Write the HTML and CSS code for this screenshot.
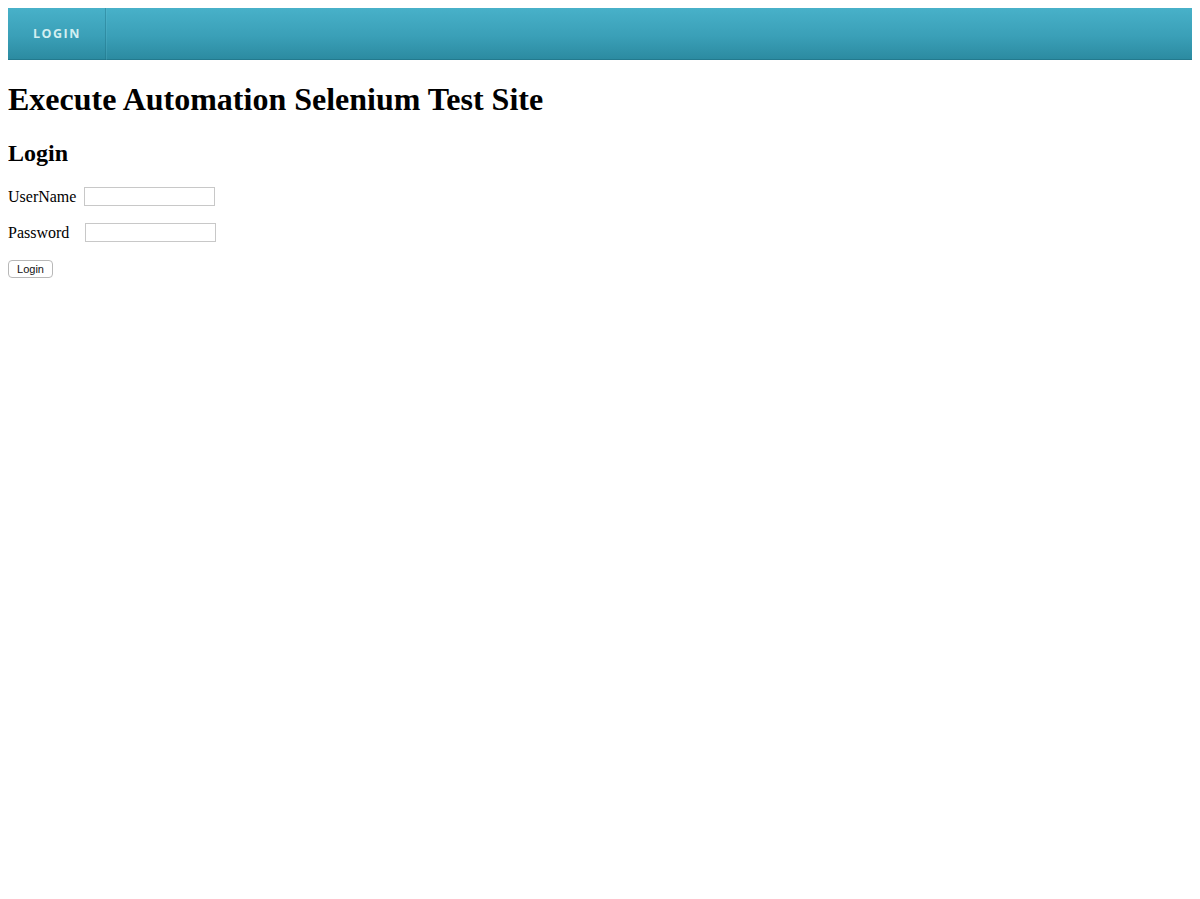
FILE: index.html
```html
<!DOCTYPE html>
<html>
<head>
<meta charset="utf-8">
<title>Execute Automation</title>
<link rel="stylesheet" href="styles.css">
</head>
<body>
<nav class="navbar">
  <ul class="menu">
    <li class="menu-item"><a href="#" class="menu-link">LOGIN</a></li>
  </ul>
</nav>
<h1 class="title">Execute Automation Selenium Test Site</h1>
<h2 class="subtitle">Login</h2>
<form class="login-form">
  <p class="row"><label class="lbl lbl-user">UserName</label><input class="field" type="text" name="UserName"></p>
  <p class="row"><label class="lbl lbl-pass">Password</label><input class="field" type="password" name="Password"></p>
  <p class="row"><button class="btn" type="button">Login</button></p>
</form>
</body>
</html>
```

FILE: styles.css
```css
body {
  margin: 8px;
  font-family: "Liberation Serif", "Times New Roman", serif;
  font-size: 16px;
  color: #000;
  background: #fff;
}
.navbar {
  height: 52px;
  background: linear-gradient(to bottom, #48b1c9 0%, #3a9fb7 55%, #2b8aa0 100%);
  box-shadow: inset 0 -1px 0 rgba(20, 90, 105, 0.35);
}
.menu {
  list-style: none;
  margin: 0;
  padding: 0;
  display: flex;
  height: 100%;
}
.menu-item {
  display: flex;
  align-items: center;
  height: 100%;
  width: 97px;
  border-right: 1px solid rgba(30, 110, 130, 0.4);
  box-shadow: 1px 0 0 rgba(110, 200, 220, 0.2);
}
.menu-link {
  display: block;
  padding-left: 25px;
  font-family: "Open Sans", "Liberation Sans", sans-serif;
  font-weight: 700;
  font-size: 12.5px;
  letter-spacing: 1.5px;
  color: #d3eff1;
  text-decoration: none;
  line-height: 50px;
}
.title {
  font-size: 32px;
  font-weight: bold;
  margin: 21.44px 0;
}
.subtitle {
  font-size: 24px;
  font-weight: bold;
  margin: 19.92px 0;
}
.login-form {
  margin: 0;
}
.row {
  margin: 16px 0;
  display: flex;
  align-items: center;
  height: 20px;
}
.lbl-user {
  margin-right: 8px;
}
.lbl-pass {
  margin-right: 16px;
}
.field {
  width: 131px;
  height: 19px;
  box-sizing: border-box;
  border: 1px solid #c8c8c8;
  padding: 0 2px;
  margin: 0;
  background: #fff;
}
.btn {
  font-family: "Liberation Sans", Arial, sans-serif;
  font-size: 11px;
  height: 18px;
  width: 45px;
  padding: 0;
  margin: 0;
  border: 1px solid #b8b8b8;
  border-radius: 4px;
  background: #fff;
  color: #111;
}
```
